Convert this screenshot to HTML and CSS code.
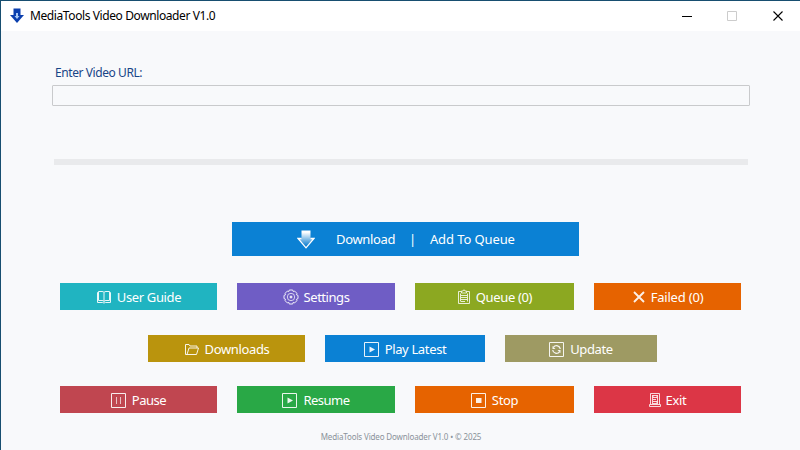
FILE: index.html
```html
<!DOCTYPE html>
<html lang="en">
<head>
<meta charset="utf-8">
<title>MediaTools Video Downloader V1.0</title>
<link rel="stylesheet" href="styles.css">
</head>
<body>
<div class="window">
  <header class="titlebar">
    <svg class="app-icon" width="14" height="16" viewBox="0 0 14 16"><path d="M3.500 .5h7v6.500H14L7 15 0 7h3.500z" fill="#0b3fae"/><path d="M6 5h2v3h1.500L7 11 4.500 8H6z" fill="#a9c8f4"/></svg>
    <h1 class="title">MediaTools Video Downloader V1.0</h1>
    <svg class="controls" width="104" height="12" viewBox="0 0 104 12" fill="none"><path d="M0 6.500h10" stroke="#000"/><path d="M45.500 1.500h9v9h-9z" stroke="#ccc"/><path d="M91.500 1.500l9 9m0-9l-9 9" stroke="#000" stroke-width="1.100"/></svg>
  </header>
  <main class="content">
    <label class="url-label" for="url">Enter Video URL:</label>
    <input class="url" id="url" type="text">
    <div class="progress"></div>
    <button class="btn download">
      <svg width="18" height="19" viewBox="0 0 18 19"><defs><linearGradient id="g" x2="0" y2="1"><stop offset=".1" stop-color="#fff"/><stop offset=".85" stop-color="#1683d2"/></linearGradient></defs><path d="M4.500 .5h9v8h3.700L9 18 .8 8.500h3.700z" fill="url(#g)"/><path d="M4.500 8.500H1L9 17.800l8-9.300h-3.500" fill="none" stroke="#fff" stroke-width="1.300"/></svg>
      <span class="dl">Download</span><span class="bar">|</span><span class="aq">Add To Queue</span>
    </button>
    <div class="row main-row">
      <button class="btn teal"><svg width="16" height="16" viewBox="0 0 16 16"><path d="M2.500 2.500H6q2 0 2 1 0-1 2-1h3.500v9H10q-2 0-2 1 0-1-2-1H2.500zM8 3.500v9M2.500 3.500h-1v10h5q1.500 1 3 0h5v-10h-1"/></svg><span class="t-guide">User Guide</span></button>
      <button class="btn purple"><svg width="16" height="16" viewBox="0 0 16 16"><path d="M6.300 1h3.400l.5 1.500 1.500-.4 2.200 2.200-.4 1.500 1.500.6v3.200l-1.500.6.4 1.500-2.200 2.200-1.500-.5-.5 1.600H6.300l-.5-1.600-1.500.5-2.200-2.200.4-1.500L1 9.600V6.400l1.500-.6-.4-1.500 2.200-2.200 1.500.4z"/><circle cx="8" cy="8" r="3.700" stroke-width=".8"/><circle cx="8" cy="8" r="1" fill="currentColor"/></svg><span class="t-settings">Settings</span></button>
      <button class="btn olive"><svg width="14" height="16" viewBox="0 0 14 16"><path d="M4 2.500H1.500v12h11v-12H10M4.500 4V2H6l1-1.300L8 2h1.500v2zM4 6.500h6M4 8.500h6M4 10.500h6M4 12.500h4M3.500 4.500v8M10.500 4.500v8" stroke-width=".9"/></svg><span class="t-queue">Queue (0)</span></button>
      <button class="btn orange"><svg width="14" height="16" viewBox="0 0 14 16"><path d="M2 3l10 10M12 3L2 13" stroke-width="1.900"/></svg><span class="t-failed">Failed (0)</span></button>
    </div>
    <div class="row mid-row">
      <button class="btn gold"><svg width="16" height="16" viewBox="0 0 16 16"><path d="M3 13.500H1.500v-10H5l1 1.500h7v2M3 13.500L5 7h9.500l-2 6.500z"/></svg><span class="t-downloads">Downloads</span></button>
      <button class="btn blue"><svg class="framed" width="16" height="15" viewBox="0 0 16 15"><path d="M.5 .5h14v14H.5z"/><path d="M5.500 4.500l5.500 3-5.500 3z" class="solid"/></svg><span class="t-latest">Play Latest</span></button>
      <button class="btn khaki"><svg class="framed" width="16" height="15" viewBox="0 0 16 15"><path d="M.5 .5h14v14H.5z"/><path d="M11.300 7A3.800 3.800 0 0 0 4.500 5.200M3.700 8A3.800 3.800 0 0 0 10.500 9.800" stroke-width="1.300"/><path d="M3.500 4v3h3zM11.500 11V8h-3z" class="solid"/></svg><span class="t-update">Update</span></button>
    </div>
    <div class="row main-row last-row">
      <button class="btn rose"><svg class="framed" width="16" height="15" viewBox="0 0 16 15"><path d="M.5 .5h14v14H.5z"/><path d="M5.500 4v7M9.500 4v7" opacity=".75"/></svg><span class="t-pause">Pause</span></button>
      <button class="btn green"><svg class="framed" width="16" height="15" viewBox="0 0 16 15"><path d="M.5 .5h14v14H.5z"/><path d="M5.500 4.500l5.500 3-5.500 3z" class="solid"/></svg><span class="t-resume">Resume</span></button>
      <button class="btn orange"><svg class="framed" width="16" height="15" viewBox="0 0 16 15"><path d="M.5 .5h14v14H.5z"/><path d="M5 5h5.500v5H5z" class="solid"/></svg><span class="t-stop">Stop</span></button>
      <button class="btn red"><svg width="12" height="16" viewBox="0 0 12 16"><path d="M1.500 12.500v-11h9v11M.5 14.500h11v-2H.5zM4 3.500h4v2H4zM4 7.500h3M4 9.500h4v2H4M3.500 3v9M8.500 3v9" stroke-width=".9"/></svg><span class="t-exit">Exit</span></button>
    </div>
    <footer class="footer"><span>MediaTools Video Downloader V1.0 • © 2025</span></footer>
  </main>
</div>
</body>
</html>
```
FILE: styles.css
```css
* { box-sizing: border-box; }
body { margin: 0; font-family: "Noto Sans", "Open Sans", sans-serif; }
.window { width: 800px; height: 450px; overflow: hidden; background: #f8f9fb; border-top: 1px solid #174e70; border-left: 1px solid #174e70; }
.titlebar { display: flex; align-items: center; height: 30px; padding: 0 14px 0 9px; background: #fff; }
.app-icon { margin-right: 6px; }
.title { margin: 0; font-size: 12px; font-weight: 400; line-height: 16px; letter-spacing: -.4px; color: #000; white-space: nowrap; }
.controls { margin-left: auto; }
.content { display: flex; flex-direction: column; padding: 34px 50px 0 51px; }
.url-label { margin-left: 3px; height: 20px; font-size: 12px; line-height: 16px; letter-spacing: -.42px; color: #184587; }
.url { width: 698px; height: 21px; border: 1px solid #c9cacc; border-radius: 1px; background: #f8f9fb; padding: 0 4px; outline: 0; }
.progress { height: 6px; margin: 53px 2px 0; background: #e9eaec; }
.btn { display: flex; align-items: center; justify-content: center; gap: 5px; height: 27px; padding: 0; border: 0; border-radius: 0; color: #fff; font: 400 13px/18px "Noto Sans", "Open Sans", sans-serif; letter-spacing: -.35px; white-space: nowrap; }
.btn svg { flex: none; fill: none; stroke: currentColor; opacity: .9; }
.btn .framed { margin-top: 2px; }
.btn .solid { fill: currentColor; stroke: none; }
.download { width: 347px; height: 34px; margin: 57px 0 0 180px; gap: 0; justify-content: flex-start; padding-left: 65px; background: #0b81d4; }
.download svg { stroke: none; opacity: 1; margin-right: 21px; }
.bar { margin: 0 14px 0 14px; }
.aq { letter-spacing: -.1px; }
.t-settings { letter-spacing: -.45px; }
.t-pause, .t-resume { letter-spacing: -.5px; }
.t-update { letter-spacing: -.35px; }
.t-failed { letter-spacing: -.2px; }
.row { display: grid; gap: 20px; }
.main-row { grid-template-columns: 157px 158px 159px 147px; margin: 27px 0 0 8px; }
.mid-row { grid-template-columns: 157px 160px 152px; margin: 25px 0 0 96px; }
.last-row { margin-top: 24px; }
.teal { background: #20b4c1; }
.purple { background: #6f5dc5; }
.olive { background: #8ca821; }
.orange { background: #e66300; }
.gold { background: #ba940d; }
.blue { background: #0b81d4; }
.khaki { background: #9e9a63; }
.rose { background: #c04650; }
.green { background: #29a846; }
.red { background: #dc3646; }
.footer { margin-top: 18px; text-align: center; font-size: 8px; line-height: 12px; letter-spacing: -.14px; color: #8a929a; }
```
